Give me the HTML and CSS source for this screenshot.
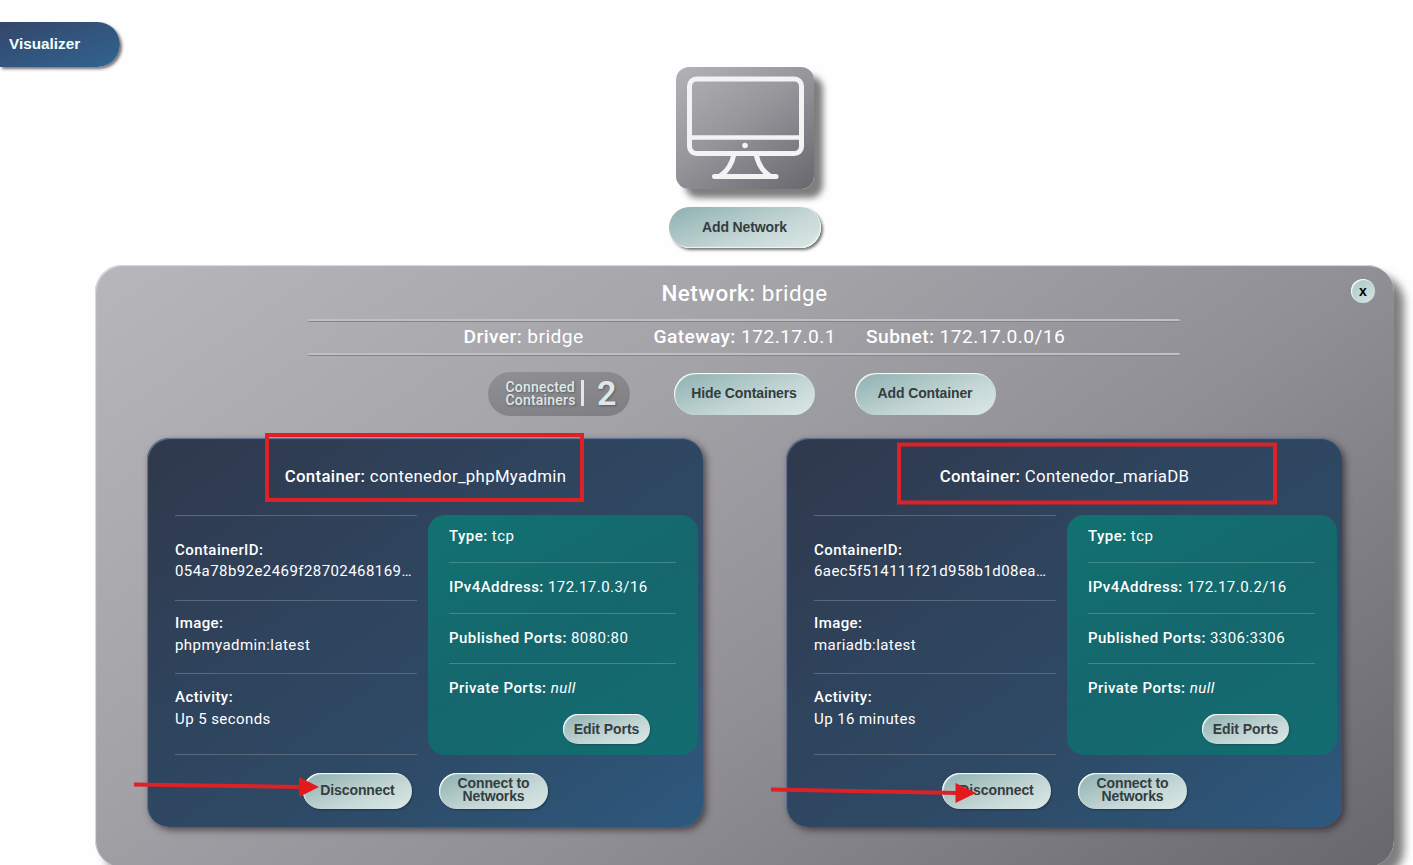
FILE: index.html
```html
<!DOCTYPE html>
<html lang="en">
<head>
<meta charset="utf-8">
<title>Visualizer</title>
<link rel="stylesheet" href="styles.css">
</head>
<body>
<div class="page">
  <header class="tab"><span>Visualizer</span></header>
  <section class="host">
    <div class="host-tile">
      <svg class="monitor" width="120" height="106" viewBox="0 0 120 106" fill="none" stroke="#f3f3f4">
        <rect x="3.500" y="3" width="112" height="74.500" rx="7" stroke-width="5"/>
        <path d="M4 61.500H115" stroke-width="4.500"/>
        <path d="M48 78Q45 93 34 100M70 78Q73 93 84 100" stroke-width="5"/>
        <path d="M28.500 100.500H90" stroke-width="5" stroke-linecap="round"/>
        <circle cx="59" cy="69.500" r="2.800" fill="#f3f3f4" stroke="none"/>
      </svg>
    </div>
    <button class="btn btn-network">Add Network</button>
  </section>

  <main class="network">
    <button class="close">x</button>
    <h1 class="network-title"><b>Network:</b> bridge</h1>
    <div class="rule"></div>
    <div class="facts">
      <span class="fact driver"><b>Driver:</b> bridge</span>
      <span class="fact gateway"><b>Gateway:</b> 172.17.0.1</span>
      <span class="fact subnet"><b>Subnet:</b> 172.17.0.0/16</span>
    </div>
    <div class="rule"></div>
    <div class="toolbar">
      <div class="counter"><span class="counter-label">Connected<br>Containers</span><i class="bar"></i><span class="count">2</span></div>
      <button class="btn btn-large">Hide Containers</button>
      <button class="btn btn-large">Add Container</button>
    </div>

    <div class="cards">
      <article class="card">
        <h2 class="card-title"><b>Container:</b> contenedor_phpMyadmin</h2>
        <div class="card-body">
          <div class="info">
            <div class="cell cell-id"><b>ContainerID:</b><span class="id">054a78b92e2469f28702468169…</span></div>
            <div class="cell cell-image"><b>Image:</b><span>phpmyadmin:latest</span></div>
            <div class="cell cell-activity"><b>Activity:</b><span>Up 5 seconds</span></div>
          </div>
          <div class="ports">
            <div class="port"><b>Type:</b> tcp</div>
            <div class="port"><b>IPv4Address:</b> 172.17.0.3/16</div>
            <div class="port"><b>Published Ports:</b> 8080:80</div>
            <div class="port"><b>Private Ports:</b> <em>null</em></div>
            <button class="btn btn-edit">Edit Ports</button>
          </div>
        </div>
        <div class="actions">
          <button class="btn btn-action">Disconnect</button>
          <button class="btn btn-action two-line">Connect to<br>Networks</button>
        </div>
      </article>
      <article class="card">
        <h2 class="card-title"><b>Container:</b> Contenedor_mariaDB</h2>
        <div class="card-body">
          <div class="info">
            <div class="cell cell-id"><b>ContainerID:</b><span class="id">6aec5f514111f21d958b1d08ea…</span></div>
            <div class="cell cell-image"><b>Image:</b><span>mariadb:latest</span></div>
            <div class="cell cell-activity"><b>Activity:</b><span>Up 16 minutes</span></div>
          </div>
          <div class="ports">
            <div class="port"><b>Type:</b> tcp</div>
            <div class="port"><b>IPv4Address:</b> 172.17.0.2/16</div>
            <div class="port"><b>Published Ports:</b> 3306:3306</div>
            <div class="port"><b>Private Ports:</b> <em>null</em></div>
            <button class="btn btn-edit">Edit Ports</button>
          </div>
        </div>
        <div class="actions">
          <button class="btn btn-action">Disconnect</button>
          <button class="btn btn-action two-line">Connect to<br>Networks</button>
        </div>
      </article>
    </div>
  </main>

  <!-- red callouts drawn over the cards -->
  <svg class="callouts" width="1413" height="865" viewBox="0 0 1413 865" fill="none" stroke="#dd2125" stroke-width="4">
    <rect x="267" y="435" width="315" height="65"/>
    <rect x="899" y="444.500" width="376" height="58"/>
    <path d="M134 784.500L302 787M771 789.500L958 793"/>
    <path d="M299 777L319 787L299 797ZM955.500 783L976 793L955.500 803Z" fill="#e4191c" stroke="none"/>
  </svg>
</div>
</body>
</html>
```

FILE: styles.css
```css
* { box-sizing: border-box; }
body { margin: 0; background: #fefefe; font-family: Roboto, sans-serif; color: #fff; }
b { font-weight: 500; }
.page { position: relative; width: 1413px; height: 865px; overflow: hidden; }

.tab {
  width: 120px; height: 45px; margin-top: 21.500px; padding-left: 9px;
  display: flex; align-items: center;
  border-radius: 0 23px 23px 0;
  background: linear-gradient(160deg, #35466a, #306491);
  box-shadow: 2px 2px 3px rgba(50, 40, 40, .65);
  font: bold 15.300px "Liberation Sans", sans-serif; color: #f2ffff;
}

.host { width: 152px; margin: .5px 0 0 668.500px; display: flex; flex-direction: column; align-items: center; }
.host-tile {
  width: 138px; height: 122px; padding: 9px 0 0 10px;
  border-radius: 13px;
  background: linear-gradient(145deg, #b2b2b7, #97969b 45%, #68676e);
  box-shadow: 9px 9px 6px rgba(0, 0, 0, .5);
}
.monitor { display: block; }

.btn {
  border: 0; padding: 0 0 2px; border-radius: 30px;
  background: linear-gradient(160deg, #8db0b0, #c4d6d5 60%, #dbe9e8);
  color: #333d40; font: bold 14px "Liberation Sans", sans-serif; letter-spacing: -.12px;
  white-space: nowrap; flex: none;
}
.btn-network { width: 152px; height: 41px; margin-top: 18px; box-shadow: 2px 2px 3px rgba(0, 0, 0, .55), inset -1px -1px 1px #eef6f5; }

.network {
  position: relative; width: 1299px; height: 602px; margin: 17px 0 0 95px;
  display: flex; flex-direction: column; align-items: center;
  border-radius: 27px;
  background: linear-gradient(145deg, #b6b6bb 0%, #a3a2a7 35%, #908f95 60%, #67676d 100%);
  box-shadow: 10px 10px 8px rgba(0, 0, 0, .5), inset 1px 1px 1px #dcdce2;
}
.close {
  position: absolute; top: 14px; right: 19px; width: 24px; height: 24px; padding: 0 0 1px;
  border: 0; border-radius: 50%; background: linear-gradient(145deg, #a8c6c5, #d7e5e4);
  box-shadow: inset 1px 1px 1px #fff;
  font: bold 14px "Liberation Sans", sans-serif; color: #000;
}
.network-title { height: 54px; margin: 0; padding-top: 14px; font-size: 22.400px; line-height: 28px; font-weight: 400; letter-spacing: .52px; }
.rule { width: 872px; height: 3px; border-top: 2px solid #bfbfc4; border-bottom: 1px solid #84838a; border-radius: 2px; transform: translateX(-1px); }
.facts { width: 872px; height: 31px; display: flex; font-size: 19.200px; line-height: 29px; letter-spacing: .42px; white-space: nowrap; }
.driver { width: 190px; margin-left: 155px; }
.gateway { width: 212.500px; }

.toolbar { width: 508px; height: 43px; margin-top: 16px; display: flex; align-items: center; transform: translateX(-3px); }
.counter {
  width: 142px; height: 44px; margin-right: 44px; padding-left: 18px; display: flex; align-items: center;
  border-radius: 22px; background: linear-gradient(170deg, #8f8f94, #7e7e83);
  color: #dfe8e8; text-shadow: 1px 1px 2px rgba(60, 60, 60, .5);
}
.counter-label { width: 75px; padding-top: 1px; font-size: 14px; line-height: 13px; font-weight: 500; letter-spacing: .2px; white-space: nowrap; }
.bar { width: 3px; height: 26px; margin-bottom: 2px; background: #dfe8e8; }
.count { margin: -2px 0 0 13.500px; font-size: 34px; font-weight: 600; }
.btn-large { width: 141px; height: 42px; padding-bottom: 1px; box-shadow: inset 1px 1px 1px #fff; }
.btn-large + .btn-large { margin-left: 40px; }

.cards { width: 1195px; margin-top: 23px; display: flex; justify-content: space-between; }
.card {
  width: 556px; height: 389px; padding: 0 5px 0 28px;
  border-radius: 22px;
  background: linear-gradient(145deg, #2f384b 0%, #2f435c 35%, #2e4a66 65%, #2d597e 100%);
  box-shadow: 3px 3px 7px rgba(45, 35, 40, .7), inset 1px 1px 1px #65779c;
}
.card-title { height: 77px; margin: 0; padding: 26px 0 0; text-align: center; font-size: 16.800px; line-height: 24px; font-weight: 400; letter-spacing: .32px; transform: translateX(-11px); }
.card-body { height: 240px; display: flex; justify-content: space-between; }
.info { width: 242px; border-top: 1px solid #58697e; }
.cell { display: flex; flex-direction: column; font-size: 15px; line-height: 22px; letter-spacing: .43px; border-bottom: 1px solid #58697e; white-space: nowrap; }
.cell-id { height: 85px; padding-top: 23px; }
.cell-id .id { line-height: 21px; }
.cell-image { height: 73px; padding-top: 11px; }
.cell-activity { height: 81px; padding-top: 12px; }
.ports { width: 270px; padding: 0 22px 0 21px; border-radius: 17px; background: linear-gradient(150deg, #117270, #15676d 50%, #126d70); }
.port { height: 50.600px; padding-top: 13px; font-size: 15px; line-height: 22px; letter-spacing: .45px; border-bottom: 1px solid #40898b; white-space: nowrap; }
.port:first-child { height: 48px; padding-top: 10px; }
.port:nth-child(4) { height: 50px; border: 0; }
.btn-edit { display: block; width: 87px; height: 30px; padding-bottom: 0; margin: 0 0 0 114px; box-shadow: inset 1px 1px 1px #fff, 1px 1px 2px rgba(0, 0, 0, .2); letter-spacing: -.05px; }
.actions { display: flex; gap: 27px; margin: 18px 0 0 128px; }
.btn-action { width: 109px; height: 36px; box-shadow: inset 1px 1px 1px #fff, 1px 1px 2px rgba(0, 0, 0, .3); }
.two-line { line-height: 13px; }

.callouts { position: absolute; left: 0; top: 0; }
```
